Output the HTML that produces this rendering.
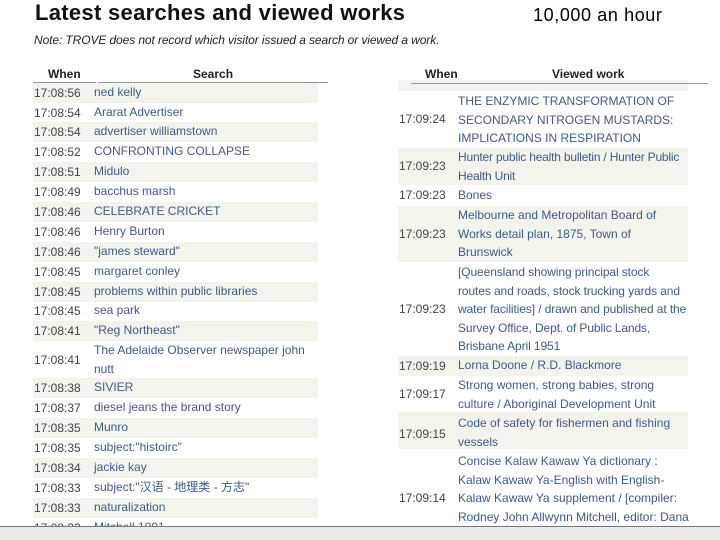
<!DOCTYPE html>
<html><head><meta charset="utf-8"><style>
body{margin:0;width:720px;height:540px;overflow:hidden;background:#fff;font-family:"Liberation Sans","Noto Sans CJK SC",sans-serif;position:relative}
.a{position:absolute}
h1{position:absolute;left:35px;top:0px;margin:0;font-size:22px;font-weight:bold;color:#111;letter-spacing:0.3px}
.note{left:34px;top:33px;font-size:12px;font-style:italic;color:#222;letter-spacing:-0.1px}
.hr{position:absolute;font-weight:bold;font-size:12px;color:#222}
.r{position:absolute;font-size:12px;color:#444;box-sizing:border-box}
.s{background:#f3f4ec}
.r .t{position:absolute;left:1px}
.r .l{position:absolute;color:#3d5a8c;line-height:18.5px}
.z{z-index:5}
</style></head><body>
<h1>Latest searches and viewed works</h1>
<div class="a note">Note: TROVE does not record which visitor issued a search or viewed a work.</div>
<div class="a" style="left:533px;top:5px;font-size:18px;color:#000;letter-spacing:0.6px">10,000 an hour</div>

<div class="hr" style="left:48px;top:67px">When</div>
<div class="hr" style="left:193px;top:67px">Search</div>
<div class="a z" style="left:33px;top:82px;width:63px;height:1px;background:#999"></div>
<div class="a z" style="left:98px;top:82px;width:230px;height:1px;background:#999"></div>

<div class="hr" style="left:425px;top:67px">When</div>
<div class="hr" style="left:552px;top:67px">Viewed work</div>
<div class="a z" style="left:411px;top:83px;width:297px;height:1px;background:#999"></div>

<div class="r s" style="left:33px;top:83px;width:285px;height:20px"><span class="t" style="top:3px">17:08:56</span><span class="l" style="left:61px;top:0">ned kelly</span></div>
<div class="r" style="left:33px;top:103px;width:285px;height:20px"><span class="t" style="top:3px">17:08:54</span><span class="l" style="left:61px;top:0">Ararat Advertiser</span></div>
<div class="r s" style="left:33px;top:122px;width:285px;height:20px"><span class="t" style="top:3px">17:08:54</span><span class="l" style="left:61px;top:0">advertiser williamstown</span></div>
<div class="r" style="left:33px;top:142px;width:285px;height:20px"><span class="t" style="top:3px">17:08:52</span><span class="l" style="left:61px;top:0">CONFRONTING COLLAPSE</span></div>
<div class="r s" style="left:33px;top:162px;width:285px;height:20px"><span class="t" style="top:3px">17:08:51</span><span class="l" style="left:61px;top:0">Midulo</span></div>
<div class="r" style="left:33px;top:182px;width:285px;height:20px"><span class="t" style="top:3px">17:08:49</span><span class="l" style="left:61px;top:0">bacchus marsh</span></div>
<div class="r s" style="left:33px;top:202px;width:285px;height:20px"><span class="t" style="top:3px">17:08:46</span><span class="l" style="left:61px;top:0">CELEBRATE CRICKET</span></div>
<div class="r" style="left:33px;top:222px;width:285px;height:20px"><span class="t" style="top:3px">17:08:46</span><span class="l" style="left:61px;top:0">Henry Burton</span></div>
<div class="r s" style="left:33px;top:242px;width:285px;height:20px"><span class="t" style="top:3px">17:08:46</span><span class="l" style="left:61px;top:0">"james steward"</span></div>
<div class="r" style="left:33px;top:262px;width:285px;height:20px"><span class="t" style="top:3px">17:08:45</span><span class="l" style="left:61px;top:0">margaret conley</span></div>
<div class="r s" style="left:33px;top:282px;width:285px;height:20px"><span class="t" style="top:3px">17:08:45</span><span class="l" style="left:61px;top:0">problems within public libraries</span></div>
<div class="r" style="left:33px;top:301px;width:285px;height:20px"><span class="t" style="top:3px">17:08:45</span><span class="l" style="left:61px;top:0">sea park</span></div>
<div class="r s" style="left:33px;top:321px;width:285px;height:20px"><span class="t" style="top:3px">17:08:41</span><span class="l" style="left:61px;top:0">"Reg Northeast"</span></div>
<div class="r" style="left:33px;top:341px;width:285px;height:37px"><span class="t" style="top:12px">17:08:41</span><span class="l" style="left:61px;top:0;width:220px">The Adelaide Observer newspaper john nutt</span></div>
<div class="r s" style="left:33px;top:378px;width:285px;height:20px"><span class="t" style="top:3px">17:08:38</span><span class="l" style="left:61px;top:0">SIVIER</span></div>
<div class="r" style="left:33px;top:398px;width:285px;height:20px"><span class="t" style="top:3px">17:08:37</span><span class="l" style="left:61px;top:0">diesel jeans the brand story</span></div>
<div class="r s" style="left:33px;top:418px;width:285px;height:20px"><span class="t" style="top:3px">17:08:35</span><span class="l" style="left:61px;top:0">Munro</span></div>
<div class="r" style="left:33px;top:438px;width:285px;height:20px"><span class="t" style="top:3px">17:08:35</span><span class="l" style="left:61px;top:0">subject:"histoirc"</span></div>
<div class="r s" style="left:33px;top:458px;width:285px;height:20px"><span class="t" style="top:3px">17:08:34</span><span class="l" style="left:61px;top:0">jackie kay</span></div>
<div class="r" style="left:33px;top:478px;width:285px;height:20px"><span class="t" style="top:3px">17:08:33</span><span class="l" style="left:61px;top:0">subject:"汉语 - 地理类 - 方志"</span></div>
<div class="r s" style="left:33px;top:498px;width:285px;height:20px"><span class="t" style="top:3px">17:08:33</span><span class="l" style="left:61px;top:0">naturalization</span></div>
<div class="r" style="left:33px;top:518px;width:285px;height:20px"><span class="t" style="top:3px">17:08:33</span><span class="l" style="left:61px;top:0">Mitchell 1991</span></div>

<div class="r s" style="left:398px;top:80px;width:290px;height:11px"></div>
<div class="r" style="left:398px;top:91px;width:290px;height:57px"><span class="t" style="top:21px">17:09:24</span><span class="l" style="left:60px;top:1px;width:232px">THE ENZYMIC TRANSFORMATION OF SECONDARY NITROGEN MUSTARDS: IMPLICATIONS IN RESPIRATION</span></div>
<div class="r s" style="left:398px;top:148px;width:290px;height:37px"><span class="t" style="top:11px">17:09:23</span><span class="l" style="left:60px;top:0;width:250px;letter-spacing:-0.2px">Hunter public health bulletin / Hunter Public<br>Health Unit</span></div>
<div class="r" style="left:398px;top:185px;width:290px;height:21px"><span class="t" style="top:3px">17:09:23</span><span class="l" style="left:60px;top:1px">Bones</span></div>
<div class="r s" style="left:398px;top:206px;width:290px;height:56px"><span class="t" style="top:21px">17:09:23</span><span class="l" style="left:60px;top:0;width:250px">Melbourne and Metropolitan Board of<br>Works detail plan, 1875, Town of<br>Brunswick</span></div>
<div class="r" style="left:398px;top:262px;width:290px;height:94px"><span class="t" style="top:40px">17:09:23</span><span class="l" style="left:60px;top:1px;width:250px;letter-spacing:-0.1px">[Queensland showing principal stock<br>routes and roads, stock trucking yards and<br>water facilities] / drawn and published at the<br>Survey Office, Dept. of Public Lands,<br>Brisbane April 1951</span></div>
<div class="r s" style="left:398px;top:356px;width:290px;height:20px"><span class="t" style="top:3px">17:09:19</span><span class="l" style="left:60px;top:0">Lorna Doone / R.D. Blackmore</span></div>
<div class="r" style="left:398px;top:376px;width:290px;height:36px"><span class="t" style="top:11px">17:09:17</span><span class="l" style="left:60px;top:0;width:250px">Strong women, strong babies, strong<br>culture / Aboriginal Development Unit</span></div>
<div class="r s" style="left:398px;top:412px;width:290px;height:37px"><span class="t" style="top:15px">17:09:15</span><span class="l" style="left:60px;top:2px;width:250px">Code of safety for fishermen and fishing<br>vessels</span></div>
<div class="r" style="left:398px;top:449px;width:290px;height:78px"><span class="t" style="top:42px">17:09:14</span><span class="l" style="left:60px;top:3px;width:250px">Concise Kalaw Kawaw Ya dictionary :<br>Kalaw Kawaw Ya-English with English-<br>Kalaw Kawaw Ya supplement / [compiler:<br>Rodney John Allwynn Mitchell, editor: Dana</span></div>

<div class="a z" style="left:0;top:526px;width:720px;height:1px;background:#777"></div>
<div class="a z" style="left:0;top:527px;width:720px;height:13px;background:#eaeae8"></div>
</body></html>
